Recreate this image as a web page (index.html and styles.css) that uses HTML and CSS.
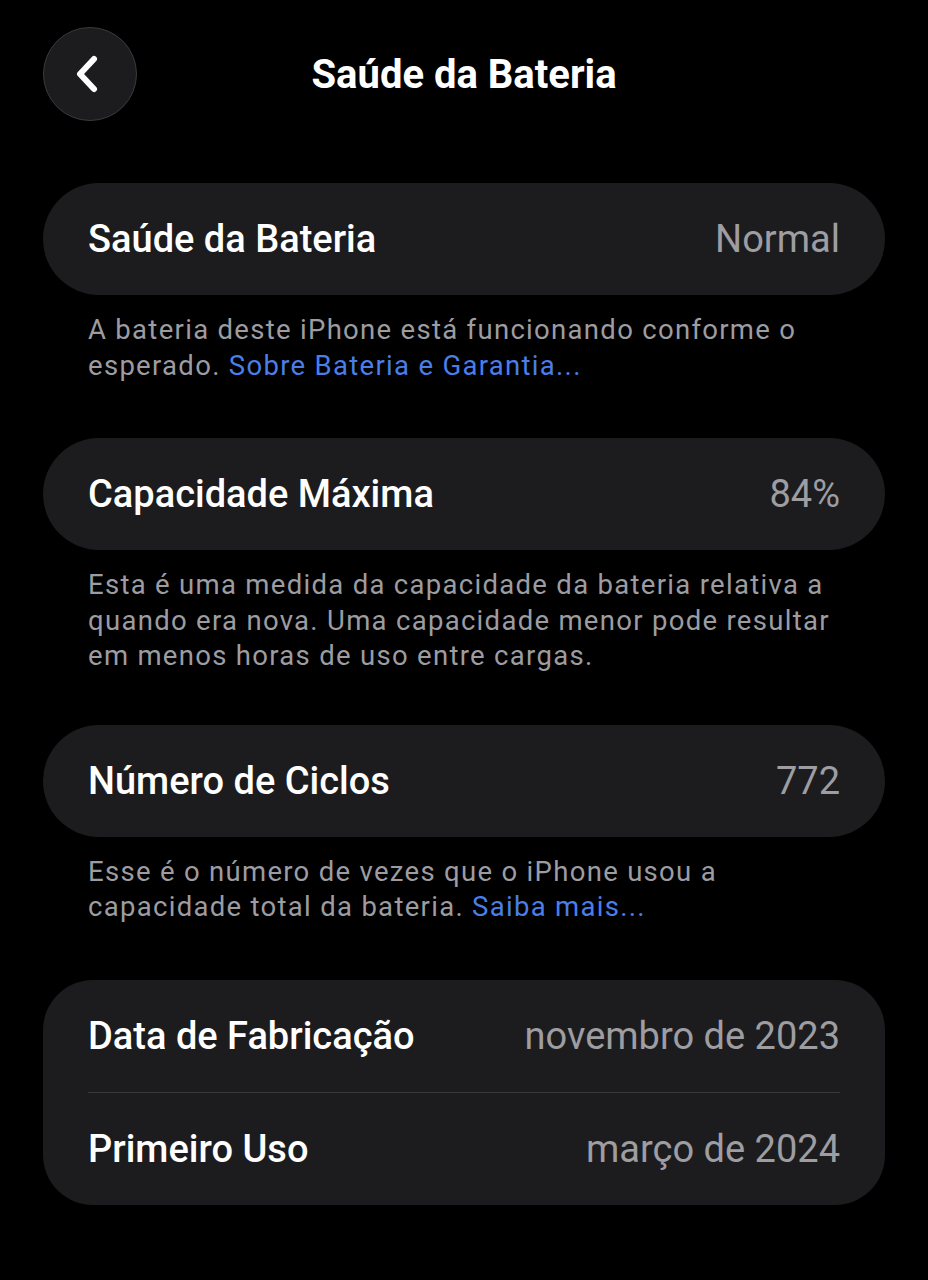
FILE: index.html
```html
<!DOCTYPE html>
<html lang="pt-BR">
<head>
<meta charset="utf-8">
<title>Saúde da Bateria</title>
<link rel="stylesheet" href="styles.css">
</head>
<body>
<div class="screen">
  <header class="nav">
    <button class="back" aria-label="Voltar">
      <svg width="34" height="44" viewBox="0 0 34 44" fill="none">
        <path d="M24 7 L10 22 L24 37" stroke="#ffffff" stroke-width="6" stroke-linecap="round" stroke-linejoin="round"/>
      </svg>
    </button>
    <h1 class="title">Saúde da Bateria</h1>
  </header>

  <section class="group">
    <div class="card">
      <div class="row"><span class="label">Saúde da Bateria</span><span class="value">Normal</span></div>
    </div>
    <p class="note">A bateria deste iPhone está funcionando conforme o esperado. <a class="link">Sobre Bateria e Garantia...</a></p>
  </section>

  <section class="group group-tight">
    <div class="card">
      <div class="row"><span class="label">Capacidade Máxima</span><span class="value">84%</span></div>
    </div>
    <p class="note">Esta é uma medida da capacidade da bateria relativa a quando era nova. Uma capacidade menor pode resultar em menos horas de uso entre cargas.</p>
  </section>

  <section class="group">
    <div class="card">
      <div class="row"><span class="label">Número de Ciclos</span><span class="value">772</span></div>
    </div>
    <p class="note">Esse é o número de vezes que o iPhone usou a capacidade total da bateria. <a class="link">Saiba mais...</a></p>
  </section>

  <section class="group">
    <div class="card card-multi">
      <div class="row"><span class="label">Data de Fabricação</span><span class="value">novembro de 2023</span></div>
      <div class="sep"></div>
      <div class="row"><span class="label">Primeiro Uso</span><span class="value">março de 2024</span></div>
    </div>
  </section>
</div>
</body>
</html>
```
FILE: styles.css
```css
* { box-sizing: border-box; }
html, body {
  margin: 0;
  padding: 0;
  background: #000;
}
body {
  font-family: Roboto, "Noto Sans", "Liberation Sans", sans-serif;
  color: #fff;
  width: 928px;
  height: 1280px;
  overflow: hidden;
}
.screen {
  padding: 27px 43px 0 43px;
  display: flex;
  flex-direction: column;
}
.nav {
  position: relative;
  height: 94px;
  display: flex;
  align-items: center;
  justify-content: center;
  margin-bottom: 62px;
}
.back {
  position: absolute;
  left: 0;
  top: 0;
  width: 94px;
  height: 94px;
  border-radius: 50%;
  background: #1c1c1e;
  border: 1.5px solid #3a3a3c;
  display: flex;
  align-items: center;
  justify-content: center;
  padding: 0 6px 0 0;
}
.title {
  margin: 0;
  font-size: 40px;
  font-weight: 700;
  letter-spacing: 0;
}
.group {
  display: flex;
  flex-direction: column;
  margin-bottom: 55px;
}
.group-tight {
  margin-bottom: 51px;
}
.card {
  background: #1c1c1e;
  border-radius: 56px;
  padding: 0 45px;
}
.card-multi {
  border-radius: 50px;
}
.row {
  height: 112px;
  display: flex;
  align-items: center;
  justify-content: space-between;
}
.label {
  font-size: 38px;
  font-weight: 500;
  color: #fff;
}
.value {
  font-size: 38px;
  font-weight: 400;
  color: #9d9da2;
}
.sep {
  height: 1px;
  background: #38383a;
}
.note {
  margin: 17px 45px 0 45px;
  font-size: 27.5px;
  line-height: 35.5px;
  color: #9c9ca1;
  letter-spacing: 1.3px;
}
.link {
  color: #4a7ee8;
}
```
